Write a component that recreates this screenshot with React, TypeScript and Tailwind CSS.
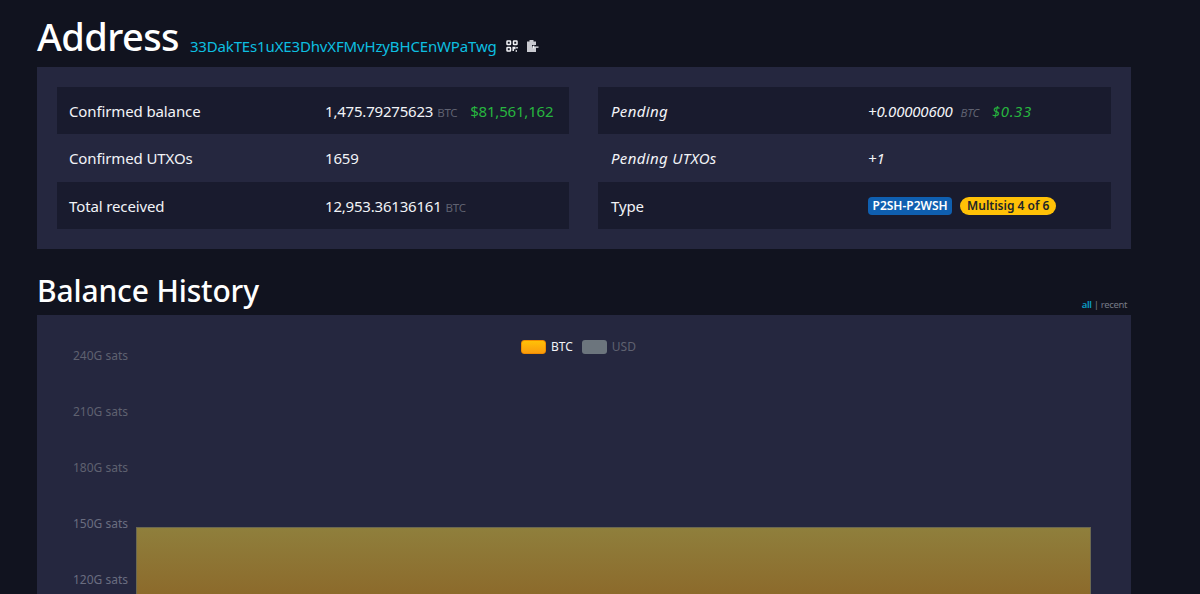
import { ReactNode } from 'react';

const Btc = ({ wide }: { wide?: boolean }) => (
  <span className={`${wide ? 'ml-[8px]' : 'ml-[4px]'} text-[11.5px] tracking-[-0.3px] text-[#5f6170]`}>BTC</span>
);

const Row = ({ label, dark, italic, right, children }: { label: string; dark?: boolean; italic?: boolean; right?: boolean; children: ReactNode }) => (
  <div className={`flex h-[47.33px] items-center text-[15px] text-[#f2f3f7] ${dark ? 'bg-[#191b2e] pt-px' : ''} ${italic ? 'italic' : ''}`}>
    <div className={`shrink-0 ${right ? 'w-[270px] pl-[13px]' : 'w-[268px] pl-3'} ${italic ? 'tracking-[0.35px]' : 'tracking-[-0.12px]'}`}>{label}</div>
    <div className="flex-1 tracking-[-0.2px] whitespace-nowrap">{children}</div>
  </div>
);

const yLabels = ['240G sats', '210G sats', '180G sats', '150G sats', '120G sats'];

export default function App() {
  return (
    <div className="h-[594px] overflow-hidden bg-[#11131f] pl-[37px] pr-[69px] font-['Noto_Sans','Open_Sans',sans-serif] text-white">
      <div className="flex h-[67px] items-end pb-[7px]">
        <h1 className="text-[38px] leading-[48px] font-medium tracking-[-0.6px]">Address</h1>
        <span className="mb-[3px] ml-[11px] text-[15px] leading-[22px] tracking-[-0.15px] text-[#0dbfe0]">33DakTEs1uXE3DhvXFMvHzyBHCEnWPaTwg</span>
        <svg className="mb-[8px] ml-[9px]" width="12" height="12" viewBox="0 0 12 12" fill="none" stroke="#f2f3f7" strokeWidth="1.5">
          <rect x="1" y="1" width="3.5" height="3.5" rx="0.6" />
          <rect x="7.5" y="1" width="3.5" height="3.5" rx="0.6" />
          <rect x="1" y="7.5" width="3.5" height="3.5" rx="0.6" />
          <path d="M7.2 11V7.5h1.6v1.8M11 7v1.6M9.6 11H11" />
        </svg>
        <svg className="mb-[7px] ml-[8px]" width="13" height="14" viewBox="0 0 13 14" fill="#c9cad0">
          <path d="M1 2.5h2.5V1h4v1.5H10V6H6v2.5h4V13H1z" />
          <path d="M12.5 7.5H8.2V6L6 8l2.2 2V8.8h4.3z" fill="#f2f3f7" />
        </svg>
      </div>

      <div className="flex h-[182px] justify-between bg-[#25273f] p-5">
        <div className="w-[512px]">
          <Row label="Confirmed balance" dark>
            1,475.79275623<Btc />
            <span className="ml-[13px] text-[#27b53f]">$81,561,162</span>
          </Row>
          <Row label="Confirmed UTXOs">1659</Row>
          <Row label="Total received" dark>
            12,953.36136161<Btc />
          </Row>
        </div>
        <div className="w-[513px]">
          <Row label="Pending" dark italic right>
            +0.00000600<Btc wide />
            <span className="ml-[13px] tracking-[0.6px] text-[#27b53f]">$0.33</span>
          </Row>
          <Row label="Pending UTXOs" italic right>+1</Row>
          <Row label="Type" dark right>
            <div className="flex items-center gap-2 text-[12px] leading-[18px] font-semibold tracking-normal">
              <span className="rounded-[4px] bg-[#0f5fb0] px-[4.5px] text-white">P2SH-P2WSH</span>
              <span className="rounded-full bg-[#ffc107] px-[7px] text-[#212529]">Multisig 4 of 6</span>
            </div>
          </Row>
        </div>
      </div>

      <div className="flex h-[66px] items-end justify-between">
        <h2 className="mb-[4px] text-[30px] leading-[40px] font-medium tracking-[-0.15px]">Balance History</h2>
        <div className="mb-[3px] pr-1 text-[9.5px] leading-[14px] tracking-[-0.35px] text-[#777a86]">
          <span className="font-semibold text-[#0b9cc4]">all</span> | recent
        </div>
      </div>

      <div className="relative h-[280px] bg-[#25273f]">
        <div className="absolute top-6 left-[484px] flex items-center text-[12px] leading-4">
          <span className="h-[14px] w-[25px] rounded-[3px] border border-[#f08c00] bg-gradient-to-b from-[#ffc107] to-[#fb9c0c]" />
          <span className="ml-[5px] text-[#f2f3f7]">BTC</span>
          <span className="ml-[9px] h-[14px] w-[25px] rounded-[3px] bg-[#6c757d]" />
          <span className="ml-[5px] text-[#5f6170]">USD</span>
        </div>

        <div className="flex">
          <div className="mr-2 w-[91px] shrink-0 pt-[33px] text-right text-[12px] leading-4">
            {yLabels.map((l, i) => (
              <div key={l} className={`mb-10 ${i < 3 ? 'text-[#5f6170]' : 'text-[#6a6d80]'}`}>{l}</div>
            ))}
          </div>
          <div className="mt-[212px] mr-[40px] h-[68px] flex-1 border-t border-r border-l border-[#6b6850] bg-gradient-to-b from-[#8f7f3c] to-[#8c6a2b]" />
        </div>
      </div>
    </div>
  );
}
